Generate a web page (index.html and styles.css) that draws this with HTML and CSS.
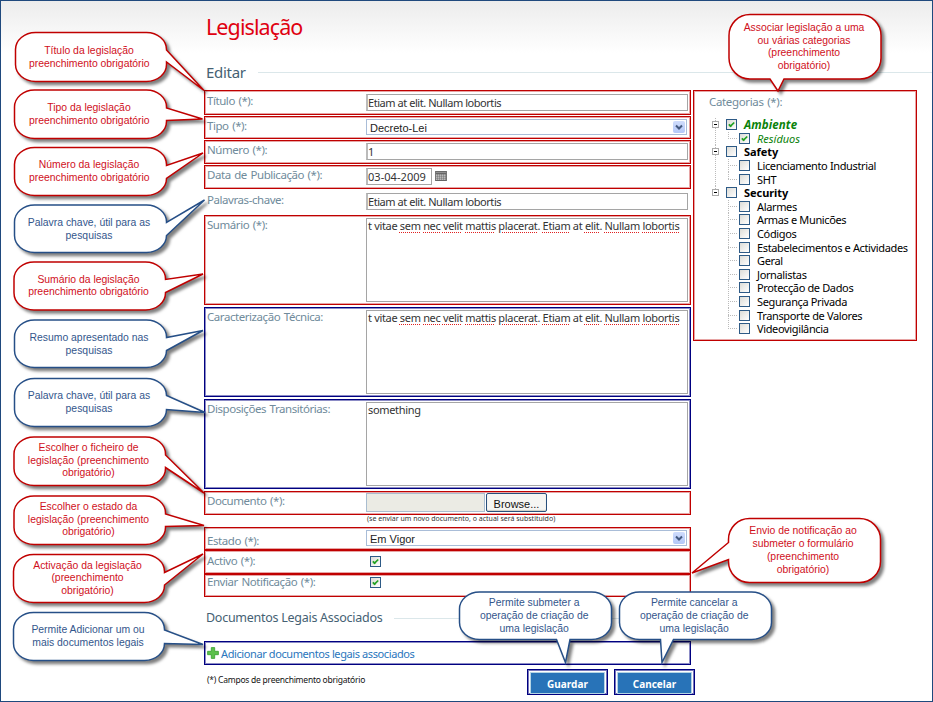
FILE: index.html
```html
<!DOCTYPE html>
<html lang="pt">
<head>
<meta charset="utf-8">
<title>Legislação</title>
<link rel="stylesheet" href="styles.css">
</head>
<body>
<div class="page">
  <h1>Legislação</h1>
  <h2 class="section"><span>Editar</span></h2>
  <div class="columns">
    <div class="form">
      <div class="row red r-title"><label>Título (*):</label><div class="input wide">Etiam at elit. Nullam lobortis</div></div>
      <div class="row red r-type"><label>Tipo (*):</label><div class="select"><span>Decreto-Lei</span><i><svg viewBox="0 0 12 12"><path d="M3 4.5 6 7.5 9 4.5"/></svg></i></div></div>
      <div class="row red r-number"><label>Número (*):</label><div class="input wide">1</div></div>
      <div class="row red r-date"><label>Data de Publicação (*):</label><div class="input date">03-04-2009</div>
        <svg class="calendar" width="12" height="10" viewBox="0 0 13 11"><path fill="#666" d="M0 0h13v11H0z"/><path fill="#999" d="M1 1h11v1H1z"/><path stroke="#eee" stroke-dasharray="1.4 .8" d="M1.2 4.5h10.8M1.2 6.7h10.8M1.2 8.9h10.8" stroke-width="1.3"/></svg></div>
      <div class="row plain"><label>Palavras-chave:</label><div class="input wide">Etiam at elit. Nullam lobortis</div></div>
      <div class="row red area r-summary"><label>Sumário (*):</label><div class="textarea">t vitae <u>sem</u> <u>nec</u> <u>velit</u> <u>mattis</u> <u>placerat</u>. <u>Etiam</u> at <u>elit</u>. <u>Nullam</u> <u>lobortis</u></div></div>
      <div class="row navy area"><label>Caracterização Técnica:</label><div class="textarea">t vitae <u>sem</u> <u>nec</u> <u>velit</u> <u>mattis</u> <u>placerat</u>. <u>Etiam</u> at <u>elit</u>. <u>Nullam</u> <u>lobortis</u></div></div>
      <div class="row navy area"><label>Disposições Transitórias:</label><div class="textarea">something</div></div>
      <div class="row red r-doc"><label>Documento (*):</label><div class="file"></div><div class="browse">Browse...</div></div>
      <div class="note">(se enviar um novo documento, o actual será substituido)</div>
      <div class="row red r-state"><label>Estado (*):</label><div class="select"><span>Em Vigor</span><i><svg viewBox="0 0 12 12"><path d="M3 4.5 6 7.5 9 4.5"/></svg></i></div></div>
      <div class="row red r-active"><label>Activo (*):</label><b class="check on"></b></div>
      <div class="row red r-notify"><label>Enviar Notificação (*):</label><b class="check on"></b></div>
      <h3 class="section"><span>Documentos Legais Associados</span></h3>
      <div class="row navy r-add"><svg width="12" height="12" viewBox="0 0 12 12"><path d="M4.3.6h3.4v3.7h3.7v3.4H7.7v3.7H4.3V7.7H.6V4.3h3.7z" fill="#5cc04c" stroke="#36a02e" stroke-width=".8"/></svg><a>Adicionar documentos legais associados</a></div>
      <div class="footer"><p>(*) Campos de preenchimento obrigatório</p><div class="btn"><span>Guardar</span></div><div class="btn"><span>Cancelar</span></div></div>
    </div>
    <div class="categories">
      <label>Categorias (*):</label>
      <div class="tree">
        <div class="group">
          <div class="root green"><s></s><b class="check on"></b><span>Ambiente</span></div>
          <div class="leaf green"><b class="check on"></b><span>Resíduos</span></div>
        </div>
        <div class="group">
          <div class="root"><s></s><b class="check"></b><span>Safety</span></div>
          <div class="leaf"><b class="check"></b><span>Licenciamento Industrial</span></div>
          <div class="leaf"><b class="check"></b><span>SHT</span></div>
        </div>
        <div class="group">
          <div class="root"><s></s><b class="check"></b><span>Security</span></div>
          <div class="leaf"><b class="check"></b><span>Alarmes</span></div>
          <div class="leaf"><b class="check"></b><span>Armas e Municões</span></div>
          <div class="leaf"><b class="check"></b><span>Códigos</span></div>
          <div class="leaf"><b class="check"></b><span>Estabelecimentos e Actividades</span></div>
          <div class="leaf"><b class="check"></b><span>Geral</span></div>
          <div class="leaf"><b class="check"></b><span>Jornalistas</span></div>
          <div class="leaf"><b class="check"></b><span>Protecção de Dados</span></div>
          <div class="leaf"><b class="check"></b><span>Segurança Privada</span></div>
          <div class="leaf"><b class="check"></b><span>Transporte de Valores</span></div>
          <div class="leaf"><b class="check"></b><span>Videovigilância</span></div>
        </div>
      </div>
    </div>
  </div>
</div>

<svg class="callouts" width="933" height="702" viewBox="0 0 933 702">
  <g class="c-red">
    <path d="M35.5 32.5H146.5a20 17 0 0 1 20 17V50L204 90.500 166.500 62V64.500a20 17 0 0 1-20 17H35.500a20 17 0 0 1-20-17V49.500a20 17 0 0 1 20-17z"/>
    <text x="89" y="53.700">Título da legislação</text><text x="89.300" y="66.500">preenchimento obrigatório</text>
  </g>
  <g class="c-red">
    <path d="M34.500 90H146.500a20 17 0 0 1 20 17V108L202.500 119 166.500 120.500V121.500a20 17 0 0 1-20 17H34.500a20 17 0 0 1-20-17V107a20 17 0 0 1 20-17z"/>
    <text x="89" y="110.700">Tipo da legislação</text><text x="89.300" y="123.500">preenchimento obrigatório</text>
  </g>
  <g class="c-red">
    <path d="M34.500 147.500H146.500a20 17 0 0 1 20 17V165.500L203 153 166.500 178.500V178.500a20 17 0 0 1-20 17H34.500a20 17 0 0 1-20-17V164.500a20 17 0 0 1 20-17z"/>
    <text x="89" y="168">Número da legislação</text><text x="89.300" y="180.800">preenchimento obrigatório</text>
  </g>
  <g class="c-blue">
    <path d="M34.500 205H146.500a20 17 0 0 1 20 17V222.500L204.500 200 166.500 235.500a20 17 0 0 1-20 17H34.500a20 17 0 0 1-20-17V222a20 17 0 0 1 20-17z"/>
    <text x="89" y="226">Palavra chave, útil para as</text><text x="89" y="238.800">pesquisas</text>
  </g>
  <g class="c-red">
    <path d="M34 262H145.500a20 17 0 0 1 20 17V279.500L203 274 165.500 292.500V293a20 17 0 0 1-20 17H34a20 17 0 0 1-20-17V279a20 17 0 0 1 20-17z"/>
    <text x="88.500" y="282.500">Sumário da legislação</text><text x="88.500" y="295.300">preenchimento obrigatório</text>
  </g>
  <g class="c-blue">
    <path d="M34.500 320H146.500a20 17 0 0 1 20 17V337.500L203 330.500 166.500 350.500a20 17 0 0 1-20 17H34.500a20 17 0 0 1-20-17V337a20 17 0 0 1 20-17z"/>
    <text x="89" y="341">Resumo apresentado nas</text><text x="89" y="353.800">pesquisas</text>
  </g>
  <g class="c-blue">
    <path d="M34.500 378.500H146.500a20 17 0 0 1 20 17L205 412.500 166.500 409.500a20 17 0 0 1-20 17H34.500a20 17 0 0 1-20-17V395.500a20 17 0 0 1 20-17z"/>
    <text x="89" y="399">Palavra chave, útil para as</text><text x="89" y="411.800">pesquisas</text>
  </g>
  <g class="c-red">
    <path d="M34 437H145.500a20 17 0 0 1 20 17V455L204 493 165.500 467.500V468.500a20 17 0 0 1-20 17H34a20 17 0 0 1-20-17V454a20 17 0 0 1 20-17z"/>
    <text x="88.500" y="450.800">Escolher o ficheiro de</text><text x="88.500" y="463.600">legislação (preenchimento</text><text x="88.500" y="476.400">obrigatório)</text>
  </g>
  <g class="c-red">
    <path d="M34 496H145.500a20 17 0 0 1 20 17V514L204 525.500 165.500 526.500V527.500a20 17 0 0 1-20 17H34a20 17 0 0 1-20-17V513a20 17 0 0 1 20-17z"/>
    <text x="88.500" y="509.800">Escolher o estado da</text><text x="88.500" y="522.600">legislação (preenchimento</text><text x="88.500" y="535.400">obrigatório)</text>
  </g>
  <g class="c-red">
    <path d="M33.500 554.500H144.500a20 17 0 0 1 20 17V572.500L203 554 164.500 585V585.500a20 17 0 0 1-20 17H33.500a20 17 0 0 1-20-17V571.500a20 17 0 0 1 20-17z"/>
    <text x="87.500" y="568.500">Activação da legislação</text><text x="87.500" y="581.300">(preenchimento</text><text x="87.500" y="594.100">obrigatório)</text>
  </g>
  <g class="c-blue">
    <path d="M33.500 612.500H144.500a20 17 0 0 1 20 17V630L203 644.500 164.500 643.500a20 17 0 0 1-20 17H33.500a20 17 0 0 1-20-17V629.500a20 17 0 0 1 20-17z"/>
    <text x="88" y="633.200">Permite Adicionar um ou</text><text x="88" y="646">mais documentos legais</text>
  </g>
  <g class="c-red">
    <path d="M750 14.500H860a21 21 0 0 1 21 21V58a21 21 0 0 1-21 21H784L778 91 770 79H750a21 21 0 0 1-21-21V35.500a21 21 0 0 1 21-21z"/>
    <text x="804" y="30.800">Associar legislação a uma</text><text x="804" y="43.500">ou várias categorias</text><text x="804" y="56.200">(preenchimento</text><text x="804" y="69">obrigatório)</text>
  </g>
  <g class="c-red">
    <path d="M749.500 518.500H859.500a21 21 0 0 1 21 21V561.500a21 21 0 0 1-21 21H749.500a21 21 0 0 1-21-21V559.500L692 573 728.500 542.500V539.500a21 21 0 0 1 21-21z"/>
    <text x="803" y="534.200">Envio de notificação ao</text><text x="803" y="547">submeter o formulário</text><text x="803" y="559.800">(preenchimento</text><text x="803" y="572.600">obrigatório)</text>
  </g>
  <g class="c-blue">
    <path d="M479.500 592H591.500a20 17 0 0 1 20 17V622.500a20 17 0 0 1-20 17H570L565.500 662.500 556.500 639.500H479.500a20 17 0 0 1-20-17V609a20 17 0 0 1 20-17z"/>
    <text x="534.200" y="606">Permite submeter a</text><text x="534.200" y="618.800">operação de criação de</text><text x="534.200" y="631.600">uma legislação</text>
  </g>
  <g class="c-blue">
    <path d="M639.500 592H751.500a20 17 0 0 1 20 17V622.500a20 17 0 0 1-20 17H673.500L662 662.500 660.500 639.500H639.500a20 17 0 0 1-20-17V609a20 17 0 0 1 20-17z"/>
    <text x="694.200" y="606">Permite cancelar a</text><text x="694.200" y="618.800">operação de criação de</text><text x="694.200" y="631.600">uma legislação</text>
  </g>
</svg>
</body>
</html>
```
FILE: styles.css
```css
* { box-sizing: border-box; }
body { margin: 0; font-family: "Noto Sans", sans-serif; font-size: 11.5px; color: #333; }
.page {
  width: 933px; height: 702px; border: 1px solid #1f497d; padding: 12px 0 0 203px; overflow: hidden;
  background: linear-gradient(#ececec, #fff 52px) no-repeat;
}
h1, h2, h3, p { margin: 0; font-weight: 400; }
h1 { padding-left: 2px; font-size: 21.5px; line-height: 28px; letter-spacing: -.9px; color: #e00010; }
.section { display: flex; align-items: center; padding-left: 2px; color: #456173; }
.section::after { content: ""; flex: 1; height: 1px; background: #dbe7ea; margin-left: 12px; }
h2.section { margin-top: 20px; font-size: 15px; line-height: 22px; letter-spacing: -.3px; }
h3.section { margin-top: 11px; font-size: 12.5px; line-height: 20px; letter-spacing: -.27px; }
.columns { display: flex; gap: 2px; align-items: flex-start; margin-top: 7px; }
.form { width: 487px; }
.row { display: flex; height: 24px; padding-left: 2px; border: 1px solid transparent; }
.red { border-color: #c00000; box-shadow: inset 0 0 0 1px #e7a5a5; }
.navy { border-color: #000080; box-shadow: inset 0 0 0 1px #8c8cc6; }
label { width: 159px; line-height: 19px; letter-spacing: -.44px; word-spacing: 1px; color: #708b9b; flex: none; white-space: nowrap; }
.r-title { height: 25px; }
.r-type { margin-top: 1px; height: 23px; }
.r-type label, .r-number label, .r-date label { line-height: 18px; }
.r-number, .r-date { margin-top: 1px; }
.plain { height: 26px; }
.plain label { line-height: 20px; }
.input {
  height: 17px; margin-top: 3px; padding-left: 0; border: 1px solid #a5a5a5; border-left: 2px solid #bbb;
  line-height: 15px; background: #fff; white-space: nowrap;
}
.input, .textarea { font-size: 11px; letter-spacing: -.45px; }
.wide { width: 322px; }
.date { width: 66px; letter-spacing: .05px; }
.r-number .input, .r-date .input { margin-top: 2px; }
.calendar { margin: 5px 0 0 3px; }
.plain .input { margin-top: 3px; }
.select {
  display: flex; justify-content: space-between; width: 321px; height: 16px; margin-top: 2px; padding: 1px 1px 1px 3px;
  border: 1px solid #a9bdd8; font: 11px/14px "Liberation Sans", sans-serif; color: #222;
}
.select i { width: 12px; height: 12px; border-radius: 2px; background: linear-gradient(#cfdcfc, #b4c8f8); }
.select svg { display: block; fill: none; stroke: #44597f; stroke-width: 2; }
.area { height: 90px; margin-top: 2px; }
.area label { line-height: 17px; }
.r-summary { margin-top: 0; }
.textarea { width: 322px; height: 84px; margin-top: 2px; padding-left: 1px; border: 1px solid #a5a5a5; letter-spacing: -.33px; line-height: 14px; white-space: nowrap; }
u { text-decoration: underline dotted #e02020 1px; text-underline-offset: 2px; }
.r-doc { margin-top: 2px; }
.r-doc label { line-height: 18px; }
.file { width: 119px; height: 19px; margin-top: 1px; border: 1px solid #a9bdd0; background: #ebebe4; }
.browse {
  width: 61px; height: 19px; margin: 1px 0 0 1px; border: 1px solid #28507c; border-radius: 2px; box-shadow: inset 0 -1px 1px #d0cfc5;
  font: 11px/20px "Liberation Sans", sans-serif; text-align: center; color: #111; background: #f6f6f3;
}
.note { height: 12px; padding-left: 163px; font-size: 7px; line-height: 8px; }
.r-state { height: 23px; }
.r-state label { line-height: 26px; }
.r-active { margin-top: 0; }
.check {
  width: 11px; height: 11px; flex: none; border: 1px solid #2d5a86; background: linear-gradient(135deg, #dcdcd7, #fff);
}
.row .check { margin: 5px 0 0 4px; }
.r-notify { height: 23px; }
.r-notify .check { margin-top: 2px; }
.r-notify label { line-height: 14px; }
.on::after { content: ""; display: block; width: 5px; height: 2px; margin: 2px 0 0 1px; border: solid #21a121; border-width: 0 0 2px 2px; box-sizing: content-box; transform: rotate(-45deg) scale(.85); }
.r-add { align-items: center; margin-top: 13px; }
.r-add a { margin-left: 2px; font-size: 11px; letter-spacing: -.4px; color: #2a76bd; }
.footer { display: flex; width: 491px; margin-top: 4px; }
.footer p { width: 323px; padding-left: 3px; font-size: 8.5px; line-height: 21px; letter-spacing: -.24px; color: #111; }
.btn { width: 81px; height: 26px; margin-right: 6px; padding: 2px; border: 1px solid #000080; box-shadow: inset 0 0 0 1px #7777bb; flex: none; }
.btn:last-child { margin-right: 0; }
.footer p + .btn { margin-left: auto; }
.btn span { display: block; height: 22px; border: 1px solid #b5d5e5; background: #2873b8; color: #fff; font-size: 10px; font-weight: 700; line-height: 22px; text-align: center; }
.categories { width: 224px; height: 251px; padding: 1px 0 0 15px; border: 1px solid #c00000; box-shadow: inset 0 0 0 1px #e7a5a5; }
.categories label { display: block; letter-spacing: -.35px; }
.tree { margin: 7px 0 0 3px; font-size: 11px; color: #000; }
.root, .leaf { display: flex; align-items: center; height: 13.6px; white-space: nowrap; }
.group { background: repeating-linear-gradient(#bbb 0 1px, transparent 1px 2px) 3px 0 / 1px 100% no-repeat; }
.group:last-child { background-size: 1px 7px; }
.root { font-weight: 700; letter-spacing: -.05px; }
.root.green { font-size: 11.5px; letter-spacing: .1px; }
.root s { width: 7px; height: 7px; border: 1px solid #aaa; background: linear-gradient(#000, #000) 1px 2px / 3px 1px no-repeat #fff; }
.root .check { margin: 0 7px 0 7px; }
.leaf { margin-left: 16px; letter-spacing: -.36px; background: repeating-linear-gradient(#bbb 0 1px, transparent 1px 2px) 0 0 / 1px 100% no-repeat, repeating-linear-gradient(90deg, #bbb 0 1px, transparent 1px 2px) 0 50% / 9px 1px no-repeat; }
.leaf .check { margin: 0 7px 0 11px; }
.leaf:last-child { background-size: 1px 7px, 9px 1px; }
.green { color: #0a820a; font-style: italic; }
.leaf.green { letter-spacing: 0; }
.callouts { position: absolute; left: 0; top: 0; font: 10.4px "Liberation Sans", sans-serif; text-anchor: middle; }
.callouts path { fill: #fff; stroke-width: 1.5; filter: drop-shadow(3px 3px 1.5px rgba(0, 0, 0, .5)); }
.c-red path { stroke: #c00000; }
.c-red text { fill: #d0101c; }
.c-blue path { stroke: #264f87; }
.c-blue text { fill: #33568c; }
```
